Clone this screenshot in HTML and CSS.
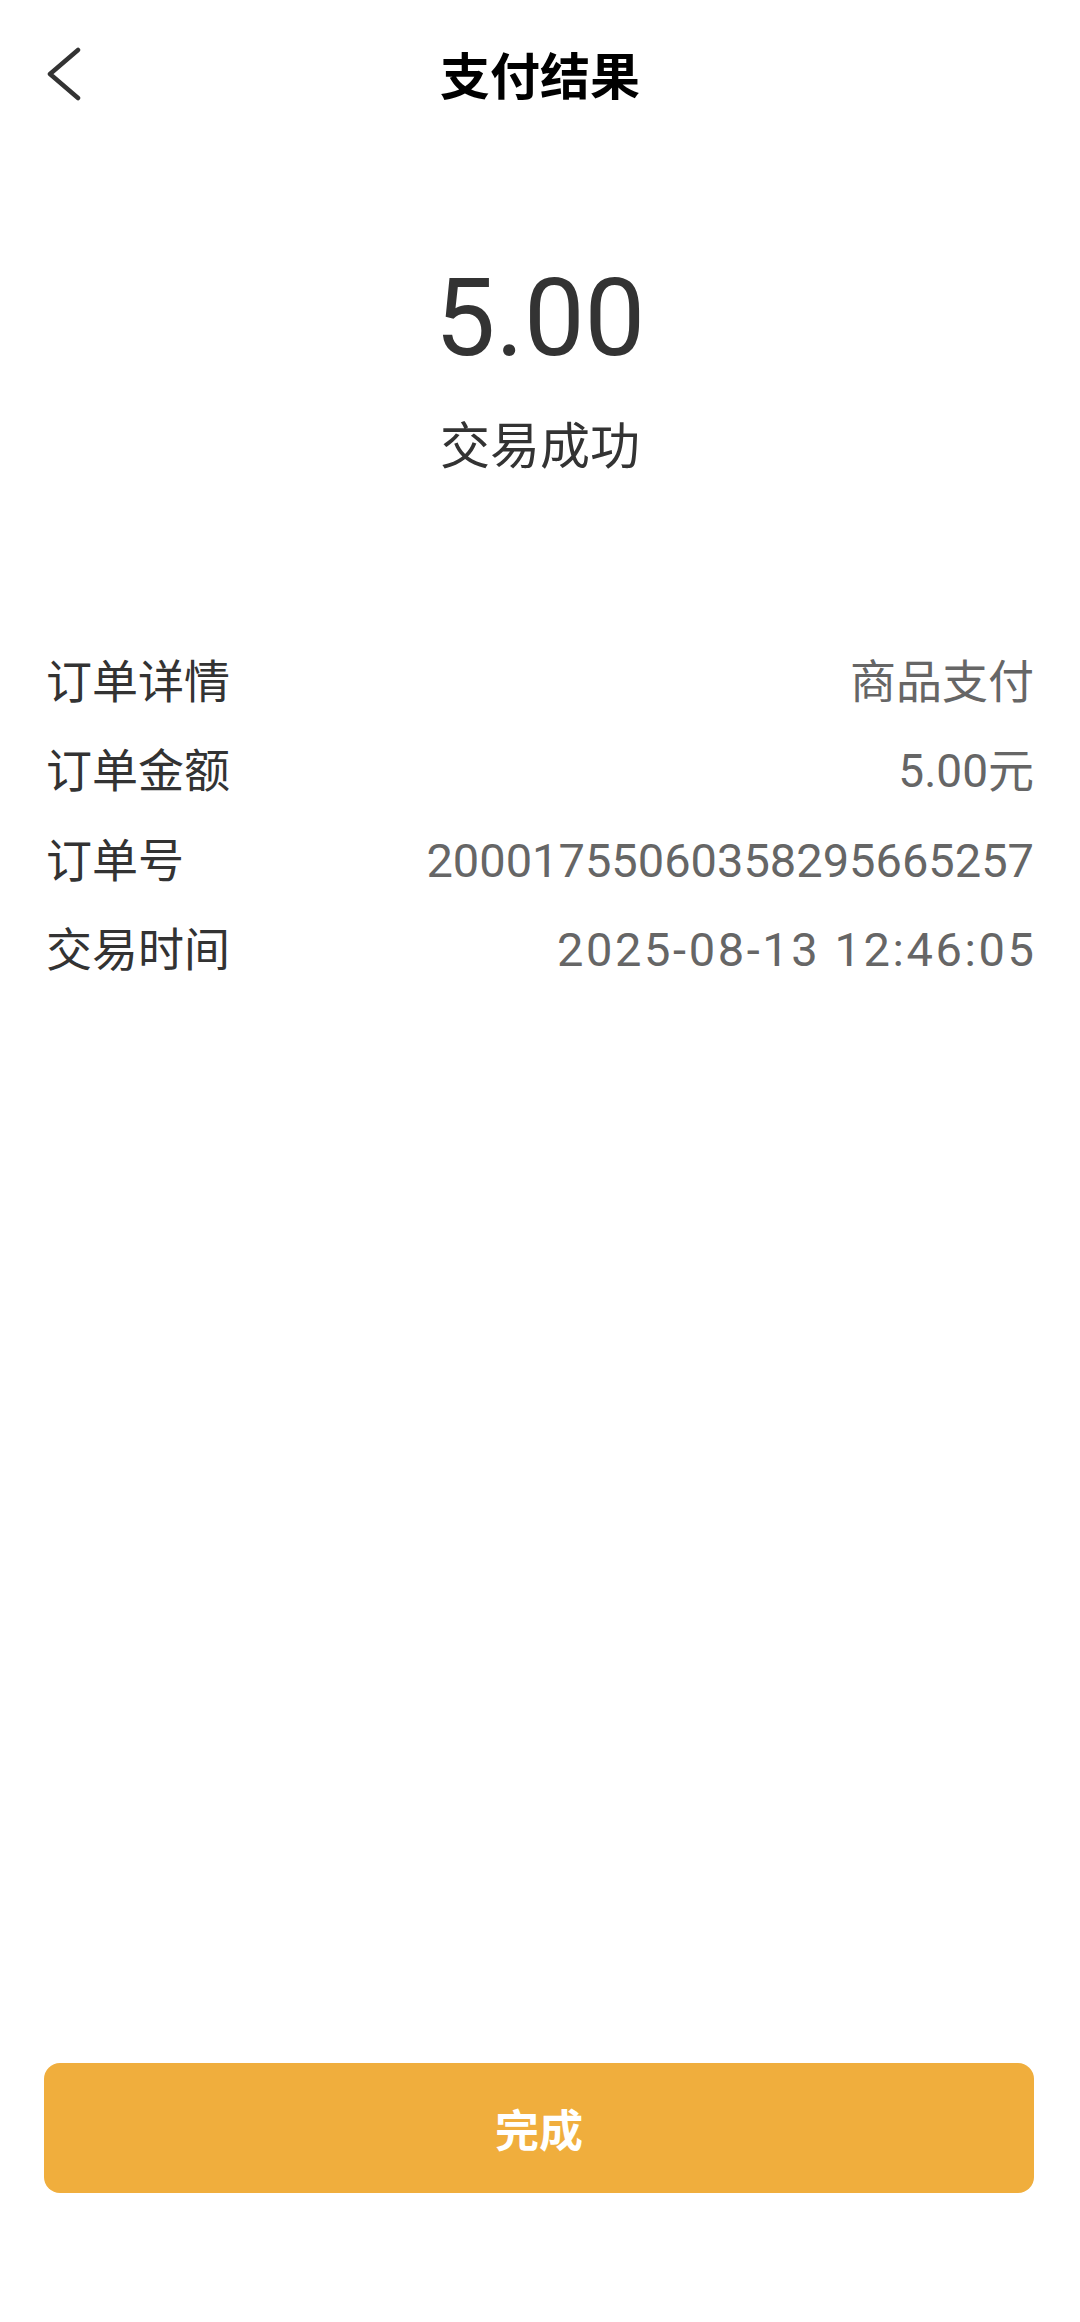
FILE: index.html
```html
<!DOCTYPE html>
<html>
<head>
    <meta charset="UTF-8">
    <title>支付结果</title>
    <link rel="stylesheet" href="styles.css">
</head>
<body>
    <div class="page">
        <div class="header">
            <svg class="back" width="40" height="56" viewBox="0 0 40 56">
                <polyline points="34,3 6,27 34,51" fill="none" stroke="#333" stroke-width="4.5" stroke-linecap="round" stroke-linejoin="round"/>
            </svg>
            <div class="title">支付结果</div>
        </div>

        <div class="amount">5.00</div>
        <div class="status">交易成功</div>

        <div class="details">
            <div class="row"><span class="label">订单详情</span><span class="value">商品支付</span></div>
            <div class="row"><span class="label">订单金额</span><span class="value">5.00元</span></div>
            <div class="row"><span class="label">订单号</span><span class="value num">20001755060358295665257</span></div>
            <div class="row"><span class="label">交易时间</span><span class="value num time">2025-08-13 12:46:05</span></div>
        </div>

        <button class="done">完成</button>
    </div>
</body>
</html>
```

FILE: styles.css
```css
html, body { margin: 0; padding: 0; background: #fff; }
body { font-family: Roboto, "Noto Sans CJK SC", sans-serif; color: #333; }
.page { min-height: 2322px; display: flex; flex-direction: column; }
.header { position: relative; height: 156px; display: flex; align-items: center; justify-content: center; }
.back { position: absolute; left: 44px; top: 47px; }
.title { font-size: 50px; font-weight: bold; color: #000; line-height: 1; }
.amount { margin-top: 108px; font-size: 108px; line-height: 1; text-align: center; color: #333; }
.status { margin-top: 50px; font-size: 50px; line-height: 1; text-align: center; color: #333; }
.details { margin-top: 166px; padding: 0 46px 0 46px; }
.row { display: flex; justify-content: space-between; align-items: baseline; height: 89px; line-height: 89px; font-size: 46px; }
.label { color: #333; }
.value { color: #666; }
.num { font-size: 47px; }
.time { letter-spacing: 2.6px; margin-right: -2.6px; }
.done { margin: auto 46px 129px 44px; height: 130px; border: none; border-radius: 16px; background: #F0AE3D; color: #fff; font-family: "Noto Sans CJK SC", sans-serif; font-size: 44px; font-weight: bold; }
```
